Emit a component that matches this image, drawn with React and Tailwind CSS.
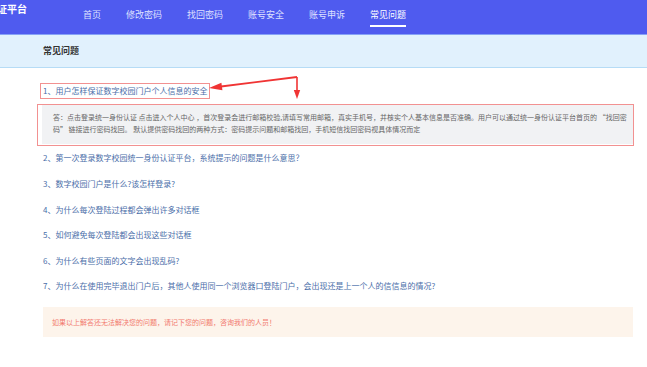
import React from "react";

const font = { fontFamily: '"Noto Sans CJK SC", "Noto Sans", sans-serif' };

const navItems = ["首页", "修改密码", "找回密码", "账号安全", "账号申诉", "常见问题"];

const questions = [
  "2、第一次登录数字校园统一身份认证平台，系统提示的问题是什么意思？",
  "3、数字校园门户是什么?该怎样登录?",
  "4、为什么每次登陆过程都会弹出许多对话框",
  "5、如何避免每次登陆都会出现这些对话框",
  "6、为什么有些页面的文字会出现乱码?",
  "7、为什么在使用完毕退出门户后，其他人使用同一个浏览器口登陆门户，会出现还是上一个人的信信息的情况?",
];

export default function App() {
  return (
    <div
      className="relative w-[647px] h-[367px] overflow-hidden bg-white font-['Noto_Sans_CJK_SC',_'Noto_Sans',_sans-serif]"
      style={font}
    >
      {/* header */}
      <div className="flex h-[35px] items-start bg-[#4f5bef] border-b border-[#86a2f6]">
        <div className="w-[83px] shrink-0 overflow-hidden pt-[3px]">
          <div className="ml-[-3px] text-[10px] leading-[12px] font-bold text-white whitespace-nowrap">
            证平台
          </div>
        </div>
        <div className="flex gap-[25px]">
          {navItems.map((n, i) => (
            <div key={n} className="flex flex-col pt-[10px]">
              <span
                className={
                  "text-[9px] leading-[10px] whitespace-nowrap " +
                  (i === 5 ? "text-white" : "text-[#dfe2ff]")
                }
              >
                {n}
              </span>
              {i === 5 && <div className="mt-[5px] h-[1.5px] bg-white" />}
            </div>
          ))}
        </div>
      </div>

      {/* sub header band */}
      <div className="flex h-[33px] items-center bg-[#e1f1fd] border-b border-[#b6dcf6] pl-[43px]">
        <span className="text-[9px] font-bold text-[#333]">常见问题</span>
      </div>

      {/* content */}
      <div className="pt-[10px]">
        <div className="flex h-[25.6px] items-center pl-[40px]">
          <span className="border border-[#f29191] px-[2px] text-[8px] leading-[14px] text-[#4a6ea9] whitespace-nowrap">
            1、用户怎样保证数字校园门户个人信息的安全
          </span>
        </div>

        <div className="ml-[37px] mr-[13px] border border-[#f29191] pl-[4px] pb-[1px]">
          <div className="bg-[#f1f2f4] pl-[11px] pt-[6px] pb-[9px] text-[7px] leading-[12px] text-[#666]">
            <div className="whitespace-nowrap">
              答：点击登录统一身份认证 点击进入个人中心 ，首次登录会进行邮箱校验,请填写常用邮箱，真实手机号，并核实个人基本信息是否准确。用户可以通过统一身份认证平台首页的 “找回密
            </div>
            <div className="whitespace-nowrap">
              码” 链接进行密码找回。 默认提供密码找回的两种方式：密码提示问题和邮箱找回，手机短信找回密码视具体情况而定
            </div>
          </div>
        </div>

        {questions.map((q) => (
          <div key={q} className="flex h-[25.6px] items-center pl-[43px]">
            <span className="text-[8px] text-[#4a6ea9] whitespace-nowrap">{q}</span>
          </div>
        ))}

        <div className="mt-[8px] ml-[43px] mr-[14px] flex h-[30px] items-center bg-[#fdf4eb] pl-[9px]">
          <span className="text-[7px] text-[#f27a6f] whitespace-nowrap">
            如果以上解答还无法解决您的问题，请记下您的问题，咨询我们的人员！
          </span>
        </div>
      </div>

      {/* annotation arrows */}
      <svg
        className="pointer-events-none absolute left-0 top-0"
        width="647"
        height="367"
        viewBox="0 0 647 367"
      >
        <line x1="297" y1="77" x2="221" y2="86.5" stroke="#f03434" strokeWidth="1.8" />
        <polygon points="209,88 222.4,90.2 221.4,82.8" fill="#f03434" />
        <line x1="297" y1="77" x2="297" y2="91" stroke="#f03434" strokeWidth="1.6" />
        <polygon points="293.8,90 300.2,90 297,99" fill="#f03434" />
      </svg>
    </div>
  );
}
